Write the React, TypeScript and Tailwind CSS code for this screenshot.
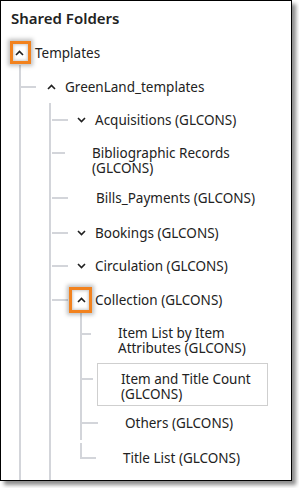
const font = { fontFamily: '"Noto Sans", "Open Sans", sans-serif' };

function Caret({ up }: { up?: boolean }) {
  return (
    <svg width="9" height="6" viewBox="0 0 9 6" className="shrink-0">
      <path
        d={up ? "M1 5 L4.5 1.5 L8 5" : "M1 1 L4.5 4.5 L8 1"}
        fill="none"
        stroke="#1f1f1f"
        strokeWidth="1.6"
      />
    </svg>
  );
}

function Hl({ className }: { className: string }) {
  return (
    <div
      className={
        "pointer-events-none absolute border-[3px] border-[#f2821e] shadow-[0_0_4px_2px_rgba(0,0,0,0.25),inset_0_0_3px_1px_rgba(0,0,0,0.2)] " +
        className
      }
    />
  );
}

export default function App() {
  return (
    <div className="h-[488px] w-[299px] bg-white text-[#222]" style={font}>
      <div className="flex h-[481px] w-[292px] flex-col border border-black bg-white shadow-[4px_4px_4px_rgba(0,0,0,0.45)]">
        <p className="pl-[10px] pt-[7px] text-[15px] font-semibold leading-[20px]">
          Shared Folders
        </p>

        {/* Templates */}
        <div className="relative mt-[13px] flex h-[24px] items-center pl-[14px] text-[13.5px]">
          <Caret up />
          <span className="ml-[11px]">Templates</span>
          <Hl className="left-[9px] top-[0px] h-[23px] w-[21px]" />
        </div>

        <div className="ml-[18px] flex flex-1 flex-col border-l-2 border-[#d3d5da] text-[13.5px]">
          {/* GreenLand */}
          <div className="mt-[10px] flex h-[24px] items-center">
            <div className="h-[2px] w-[15px] bg-[#d3d5da]" />
            <div className="ml-[11px]">
              <Caret up />
            </div>
            <span className="ml-[9px]">GreenLand_templates</span>
          </div>

          <div className="ml-[28px] mt-[4px] flex flex-1 flex-col border-l-2 border-[#d3d5da]">
            <div className="mt-[5px] flex h-[24px] items-center">
              <div className="ml-[1px] h-[2px] w-[16px] bg-[#d3d5da]" />
              <div className="ml-[9px]">
                <Caret />
              </div>
              <span className="ml-[9px]">Acquisitions (GLCONS)</span>
            </div>

            <div className="mt-[14px] flex items-start">
              <div className="ml-[1px] mt-[6px] h-[2px] w-[13px] bg-[#d3d5da]" />
              <span className="ml-[27px] leading-[15px]">
                Bibliographic Records
                <br />
                (GLCONS)
              </span>
            </div>

            <div className="mt-[10px] flex h-[24px] items-center">
              <div className="ml-[1px] h-[2px] w-[16px] bg-[#d3d5da]" />
              <span className="ml-[28px]">Bills_Payments (GLCONS)</span>
            </div>

            <div className="mt-[11px] flex h-[24px] items-center">
              <div className="ml-[1px] h-[2px] w-[16px] bg-[#d3d5da]" />
              <div className="ml-[9px]">
                <Caret />
              </div>
              <span className="ml-[9px]">Bookings (GLCONS)</span>
            </div>

            <div className="mt-[9px] flex h-[24px] items-center">
              <div className="ml-[1px] h-[2px] w-[16px] bg-[#d3d5da]" />
              <div className="ml-[9px]">
                <Caret />
              </div>
              <span className="ml-[9px]">Circulation (GLCONS)</span>
            </div>

            <div className="relative mt-[10px] flex h-[24px] items-center">
              <div className="ml-[1px] h-[2px] w-[16px] bg-[#d3d5da]" />
              <div className="ml-[9px]">
                <Caret up />
              </div>
              <span className="ml-[9px]">Collection (GLCONS)</span>
              <Hl className="left-[18px] top-[-1px] h-[26px] w-[23px]" />
            </div>

            {/* Collection children */}
            <div className="ml-[29px] mt-[1px] flex flex-col">
              <div className="flex flex-col border-l-2 border-[#d3d5da] pb-[5px]">
                <div className="mt-[13px] flex items-start">
                  <div className="mt-[7px] h-[2px] w-[9px] bg-[#d3d5da]" />
                  <span className="ml-[27px] leading-[15px]">
                    Item List by Item
                    <br />
                    Attributes (GLCONS)
                  </span>
                </div>

                <div className="mt-[7px] flex items-start">
                  <div className="mt-[15px] h-[2px] w-[11px] bg-[#d3d5da]" />
                  <div className="ml-[4px] h-[43px] w-[171px] border border-[#cfcfcf] pl-[23px] pt-[8px] leading-[15px]">
                    Item and Title Count
                    <br />
                    (GLCONS)
                  </div>
                </div>

                <div className="mt-[5px] flex h-[24px] items-center">
                  <div className="h-[2px] w-[16px] bg-[#d3d5da]" />
                  <span className="ml-[27px]">Others (GLCONS)</span>
                </div>
              </div>

              <div className="flex items-start">
                <div className="mt-[3px] h-[16px] w-[16px] border-b-2 border-l-2 border-[#d3d5da]" />
                <span className="ml-[27px] mt-[6px] leading-[24px]">Title List (GLCONS)</span>
              </div>
            </div>
          </div>
        </div>
      </div>
    </div>
  );
}
